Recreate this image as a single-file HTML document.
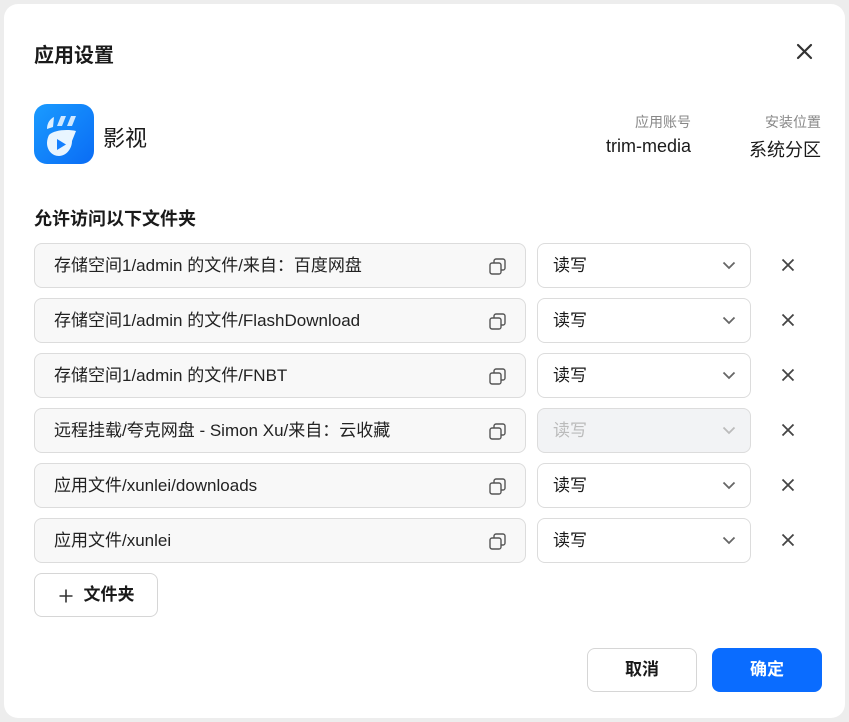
<!DOCTYPE html>
<html><head><meta charset="utf-8"><style>
*{box-sizing:border-box;margin:0;padding:0}
body{width:849px;height:722px;background:#ededed;font-family:"Liberation Sans","Noto Sans CJK SC",sans-serif;color:#1a1a1a;position:relative;overflow:hidden}
.dlg{position:absolute;left:4px;top:4px;width:841px;height:714px;background:#fff;border-radius:14px}
.abs{position:absolute}
.title{left:34px;top:39px;font-size:20px;font-weight:bold}
.row{position:absolute;left:34px;height:45px}
.path{position:absolute;left:0;top:0;width:492px;height:45px;border:1px solid #dcdcdc;border-radius:8px;background:#f8f8f8;font-size:17px;line-height:43px;padding-left:19px;color:#222}
.copy{position:absolute;right:19px;top:14px}
.sel{position:absolute;left:503px;top:0;width:214px;height:45px;border:1px solid #dcdcdc;border-radius:8px;background:#fff;font-size:17px;line-height:43px;padding-left:15px}
.sel.dis{background:#f2f3f5;color:#bbb}
.chev{position:absolute;right:14px;top:17px}
.x{position:absolute;left:747px;top:15px}
.btn{position:absolute;height:44px;border-radius:8px;font-size:17px;font-weight:bold;text-align:center;line-height:44px}
.r{position:absolute;text-align:right}
</style></head><body>
<div class="dlg"></div>
<div class="abs title">应用设置</div>
<svg class="abs" style="left:796px;top:43px" width="17" height="17" viewBox="0 0 17 17"><path d="M2 2L15 15M15 2L2 15" stroke="#333" stroke-width="2.2" stroke-linecap="round"/></svg>
<svg class="abs" style="left:34px;top:104px" width="60" height="60" viewBox="0 0 60 60"><defs><linearGradient id="g" x1="0" y1="0" x2="1" y2="1"><stop offset="0" stop-color="#1a9bff"/><stop offset="1" stop-color="#0a6cf5"/></linearGradient></defs><rect width="60" height="60" rx="13" fill="url(#g)"/><path d="M13 25c0-6 3-10 7-12l-1 10z" fill="#dff0ff"/><path d="M23 22l4-10h5l-4 10z M33 22l4-10h5l-4 10z" fill="#cfe8ff"/><path d="M15 31c5-5 18-6 27-4l-4 10c0 8-6 15-13 15s-12-6-12-13c0-3 1-6 2-8z" fill="#e9f5ff"/><path d="M23 35v11l9-5.5z" fill="#1580ff"/></svg>
<div class="abs" style="left:103px;top:121px;font-size:22px">影视</div>
<div class="r" style="right:158px;top:112px;font-size:14px;color:#888">应用账号</div>
<div class="r" style="right:158px;top:136px;font-size:18px">trim-media</div>
<div class="r" style="right:28px;top:112px;font-size:14px;color:#888">安装位置</div>
<div class="r" style="right:28px;top:136px;font-size:18px">系统分区</div>
<div class="abs" style="left:34px;top:205px;font-size:18px;font-weight:bold">允许访问以下文件夹</div>

<div class="row" style="top:243px"><div class="path">存储空间1/admin 的文件/来自：百度网盘<svg class="copy" width="17" height="17" viewBox="0 0 17 17"><rect x="1" y="5" width="11" height="11" rx="2" fill="none" stroke="#555" stroke-width="1.4"/><path d="M5 5V3a2 2 0 0 1 2-2h7a2 2 0 0 1 2 2v7a2 2 0 0 1-2 2h-2" fill="none" stroke="#555" stroke-width="1.4"/></svg></div><div class="sel">读写<svg class="chev" width="14" height="9" viewBox="0 0 14 9"><path d="M1.5 1.5L7 7l5.5-5.5" fill="none" stroke="#666" stroke-width="1.8"/></svg></div><svg class="x" width="14" height="14" viewBox="0 0 14 14"><path d="M1.5 1.5L12.5 12.5M12.5 1.5L1.5 12.5" stroke="#444" stroke-width="1.8"/></svg></div>

<div class="row" style="top:298px"><div class="path">存储空间1/admin 的文件/FlashDownload<svg class="copy" width="17" height="17" viewBox="0 0 17 17"><rect x="1" y="5" width="11" height="11" rx="2" fill="none" stroke="#555" stroke-width="1.4"/><path d="M5 5V3a2 2 0 0 1 2-2h7a2 2 0 0 1 2 2v7a2 2 0 0 1-2 2h-2" fill="none" stroke="#555" stroke-width="1.4"/></svg></div><div class="sel">读写<svg class="chev" width="14" height="9" viewBox="0 0 14 9"><path d="M1.5 1.5L7 7l5.5-5.5" fill="none" stroke="#666" stroke-width="1.8"/></svg></div><svg class="x" width="14" height="14" viewBox="0 0 14 14"><path d="M1.5 1.5L12.5 12.5M12.5 1.5L1.5 12.5" stroke="#444" stroke-width="1.8"/></svg></div>

<div class="row" style="top:353px"><div class="path">存储空间1/admin 的文件/FNBT<svg class="copy" width="17" height="17" viewBox="0 0 17 17"><rect x="1" y="5" width="11" height="11" rx="2" fill="none" stroke="#555" stroke-width="1.4"/><path d="M5 5V3a2 2 0 0 1 2-2h7a2 2 0 0 1 2 2v7a2 2 0 0 1-2 2h-2" fill="none" stroke="#555" stroke-width="1.4"/></svg></div><div class="sel">读写<svg class="chev" width="14" height="9" viewBox="0 0 14 9"><path d="M1.5 1.5L7 7l5.5-5.5" fill="none" stroke="#666" stroke-width="1.8"/></svg></div><svg class="x" width="14" height="14" viewBox="0 0 14 14"><path d="M1.5 1.5L12.5 12.5M12.5 1.5L1.5 12.5" stroke="#444" stroke-width="1.8"/></svg></div>

<div class="row" style="top:408px"><div class="path">远程挂载/夸克网盘 - Simon Xu/来自：云收藏<svg class="copy" width="17" height="17" viewBox="0 0 17 17"><rect x="1" y="5" width="11" height="11" rx="2" fill="none" stroke="#555" stroke-width="1.4"/><path d="M5 5V3a2 2 0 0 1 2-2h7a2 2 0 0 1 2 2v7a2 2 0 0 1-2 2h-2" fill="none" stroke="#555" stroke-width="1.4"/></svg></div><div class="sel dis">读写<svg class="chev" width="14" height="9" viewBox="0 0 14 9"><path d="M1.5 1.5L7 7l5.5-5.5" fill="none" stroke="#bbb" stroke-width="1.8"/></svg></div><svg class="x" width="14" height="14" viewBox="0 0 14 14"><path d="M1.5 1.5L12.5 12.5M12.5 1.5L1.5 12.5" stroke="#444" stroke-width="1.8"/></svg></div>

<div class="row" style="top:463px"><div class="path">应用文件/xunlei/downloads<svg class="copy" width="17" height="17" viewBox="0 0 17 17"><rect x="1" y="5" width="11" height="11" rx="2" fill="none" stroke="#555" stroke-width="1.4"/><path d="M5 5V3a2 2 0 0 1 2-2h7a2 2 0 0 1 2 2v7a2 2 0 0 1-2 2h-2" fill="none" stroke="#555" stroke-width="1.4"/></svg></div><div class="sel">读写<svg class="chev" width="14" height="9" viewBox="0 0 14 9"><path d="M1.5 1.5L7 7l5.5-5.5" fill="none" stroke="#666" stroke-width="1.8"/></svg></div><svg class="x" width="14" height="14" viewBox="0 0 14 14"><path d="M1.5 1.5L12.5 12.5M12.5 1.5L1.5 12.5" stroke="#444" stroke-width="1.8"/></svg></div>

<div class="row" style="top:518px"><div class="path">应用文件/xunlei<svg class="copy" width="17" height="17" viewBox="0 0 17 17"><rect x="1" y="5" width="11" height="11" rx="2" fill="none" stroke="#555" stroke-width="1.4"/><path d="M5 5V3a2 2 0 0 1 2-2h7a2 2 0 0 1 2 2v7a2 2 0 0 1-2 2h-2" fill="none" stroke="#555" stroke-width="1.4"/></svg></div><div class="sel">读写<svg class="chev" width="14" height="9" viewBox="0 0 14 9"><path d="M1.5 1.5L7 7l5.5-5.5" fill="none" stroke="#666" stroke-width="1.8"/></svg></div><svg class="x" width="14" height="14" viewBox="0 0 14 14"><path d="M1.5 1.5L12.5 12.5M12.5 1.5L1.5 12.5" stroke="#444" stroke-width="1.8"/></svg></div>

<div class="btn" style="left:34px;top:573px;width:124px;border:1px solid #d6d6d6;line-height:42px;padding-left:26px">文件夹<svg class="abs" style="left:24px;top:15px" width="14" height="14" viewBox="0 0 14 14"><path d="M7 0.5V13.5M0.5 7H13.5" stroke="#333" stroke-width="1.6"/></svg></div>
<div class="btn" style="left:587px;top:648px;width:110px;border:1px solid #d6d6d6;line-height:42px">取消</div>
<div class="btn" style="left:712px;top:648px;width:110px;background:#0a6cff;color:#fff">确定</div>
</body></html>
